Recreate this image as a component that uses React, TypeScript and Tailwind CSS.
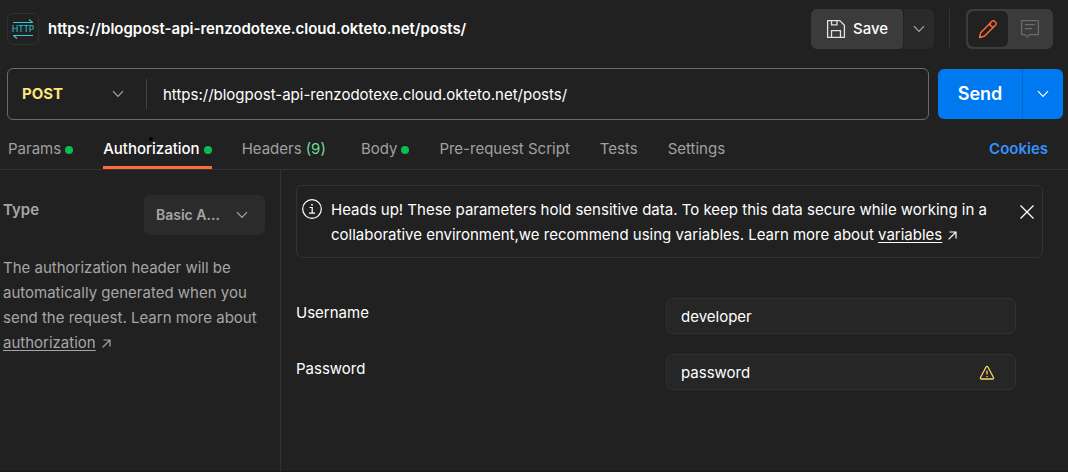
import type { ReactNode } from "react";

function Chevron({ className = "" }: { className?: string }) {
  return (
    <svg aria-hidden="true" className={className} width="12" height="8" viewBox="0 0 12 8" fill="none" stroke="currentColor" strokeWidth="1.2">
      <path d="M1 1.2 6 6.4l5-5.2" />
    </svg>
  );
}

function ExternalArrow() {
  return (
    <svg aria-hidden="true" className="ml-1.5 inline-block" width="9" height="9" viewBox="0 0 9 9" fill="none" stroke="currentColor" strokeWidth="1.2">
      <path d="M1.5 1h6.5v6.5M8 1 .6 8.4" />
    </svg>
  );
}

function HttpIcon() {
  return (
    <svg role="img" aria-label="HTTP request" width="24" height="20" viewBox="0 0 24 20" fill="none" stroke="#2fcbdc" strokeWidth="1.1">
      <path d="M2 3.500h20M18 .5l3.500 3M2 16.500h20M6 19.500l-3.500-3" />
      <text x="12" y="13" textAnchor="middle" fill="#2fcbdc" stroke="none" className="font-['Noto_Sans',sans-serif] text-[9px]">
        HTTP
      </text>
    </svg>
  );
}

function SaveIcon() {
  return (
    <svg aria-hidden="true" width="20" height="20" viewBox="0 0 20 20" fill="none" stroke="#e0e0e0" strokeWidth="1.3">
      <path d="M1.600 1.600h12.200l4.600 4.600v12.200H1.600z" strokeLinejoin="round" />
      <path d="M5.500 1.800v4h5.500v-4M5.500 18.200v-6.500h9v6.500" />
    </svg>
  );
}

function PencilIcon() {
  return (
    <svg aria-hidden="true" width="20" height="20" viewBox="0 0 20 20" fill="none" stroke="#ff6c37" strokeWidth="1.4" strokeLinejoin="round">
      <path d="M1.500 18.500l1.200-4.800L14 2.300a1.900 1.900 0 0 1 2.600 0l1.100 1.100a1.900 1.900 0 0 1 0 2.600L6.300 17.300zM12.600 3.800a2.600 2.600 0 0 0 3.600 3.600" />
    </svg>
  );
}

function CommentIcon() {
  return (
    <svg aria-hidden="true" width="20" height="20" viewBox="0 0 20 20" fill="none" stroke="#6b6b6b" strokeWidth="1.300">
      <path d="M1.600 1.600h16.800v14H9.500L7.300 17.900 5 15.600H1.600zM5 5.700h10M5 9.700h7" strokeLinejoin="round" />
    </svg>
  );
}

function Tab({ children, dot = false, active = false }: { children: ReactNode; dot?: boolean; active?: boolean }) {
  return (
    <button
      type="button"
      role="tab"
      aria-selected={active}
      className={
        active
          ? "flex h-10 items-center gap-1 border-b-3 border-[#ff6c37] pt-1 font-medium text-white"
          : "flex h-10 items-center gap-1 border-b-3 border-transparent pt-1 text-[#a0a0a0]"
      }
    >
      {children}
      {dot && <span className="size-2 rounded-full bg-[#0cbb52]" />}
    </button>
  );
}

function Header() {
  return (
    <header className="flex h-[58px] items-center pr-[15px] pl-[7px]">
      <div className="flex size-8 items-center justify-center rounded-md border border-[#303030]">
        <HttpIcon />
      </div>
      <h1 className="ml-[9px] grow font-semibold text-white">https://blogpost-api-renzodotexe.cloud.okteto.net/posts/</h1>
      <div className="flex h-10 gap-px">
        <button type="button" className="flex w-[92px] items-center justify-center gap-[7px] rounded-l-md rounded-r bg-[#3b3b3b] font-medium text-white">
          <SaveIcon />
          Save
        </button>
        <button type="button" aria-label="More save options" className="flex w-[30px] items-center justify-center rounded-r-md bg-[#2a2a2a] text-[#a6a6a6]">
          <Chevron />
        </button>
      </div>
      <div className="mr-4 ml-[15px] h-10 w-px bg-[#333]" />
      <div className="flex h-10 w-[87px] rounded-md bg-[#3b3b3b] p-0.5">
        <button type="button" aria-label="Edit" aria-pressed="true" className="flex w-10 items-center justify-center rounded-md bg-[#212121]">
          <PencilIcon />
        </button>
        <button type="button" aria-label="Comments" className="flex grow items-center justify-center">
          <CommentIcon />
        </button>
      </div>
    </header>
  );
}

function RequestBar() {
  return (
    <div className="flex gap-[9px] pt-[10px] pr-[5px] pl-[7px]">
      <div className="flex h-13 grow items-center rounded-md border border-[#6b6b6b]">
        <div className="grid w-[138px] items-center">
          <select aria-label="Method" defaultValue="POST" className="col-start-1 row-start-1 h-10 appearance-none bg-transparent pl-[14px] font-bold text-[#ffe47e] outline-none">
            <option>POST</option>
          </select>
          <Chevron className="pointer-events-none col-start-1 row-start-1 mr-[22px] justify-self-end text-[#a6a6a6]" />
        </div>
        <div className="h-[30px] w-px bg-[#444]" />
        <input aria-label="Request URL" defaultValue="https://blogpost-api-renzodotexe.cloud.okteto.net/posts/" className="h-full min-w-0 grow bg-transparent px-4 text-white outline-none" />
      </div>
      <div className="mt-px flex h-[50px] overflow-hidden rounded-md bg-[#0079f0] text-white">
        <button type="button" className="w-[84px] text-lg font-semibold">Send</button>
        <button type="button" aria-label="More send options" className="flex w-[41px] items-center justify-center border-l border-[#0668cc]">
          <Chevron />
        </button>
      </div>
    </div>
  );
}

function AuthSidebar() {
  return (
    <aside className="w-[281px] shrink-0 border-r border-[#333] pt-[25px] pr-[15px] pl-[3px] text-[#a6a6a6]">
      <div className="flex justify-between">
        <label htmlFor="auth-type" className="mt-1 font-semibold">Type</label>
        <div className="grid h-10 w-[121px] items-center rounded-md bg-[#2b2b2b]">
          <select id="auth-type" defaultValue="Basic A..." className="col-start-1 row-start-1 h-10 w-full appearance-none bg-transparent pl-3 text-sm font-semibold outline-none">
            <option>Basic A...</option>
          </select>
          <Chevron className="pointer-events-none col-start-1 row-start-1 mr-[17px] justify-self-end" />
        </div>
      </div>
      <p className="mt-5 leading-[25px]">
        The authorization header will be automatically generated when you send the request. Learn more about{" "}
        <a href="#authorization" className="underline underline-offset-2">authorization</a>
        <ExternalArrow />
      </p>
    </aside>
  );
}

function Field({ id, label, value, warn = false }: { id: string; label: string; value: string; warn?: boolean }) {
  return (
    <div className="flex items-center justify-between">
      <label htmlFor={id} className="mb-1.5">{label}</label>
      <div className="flex h-9 w-[350px] items-center rounded-md border border-[#303030] bg-[#262626]">
        <input id={id} defaultValue={value} className="h-full min-w-0 grow bg-transparent pl-[14px] outline-none" />
        {warn && (
          <svg role="img" aria-label="Sensitive value" className="mt-0.5 mr-5" width="16" height="16" viewBox="0 0 16 16" fill="none" stroke="#f5d565" strokeWidth="1.300" strokeLinejoin="round">
            <path d="M7.200 1.800 1.500 12.500c-.3.700 0 1.500.8 1.500h11.400c.8 0 1.100-.8.800-1.500L8.800 1.800c-.4-.7-1.200-.7-1.600 0zM8 5.500v4M8 11v1.200" />
          </svg>
        )}
      </div>
    </div>
  );
}

function AuthForm() {
  return (
    <section className="grow pt-[15px] pr-[25px] pl-[15px] text-white">
      <div role="note" className="flex items-start rounded-md border border-[#333] pt-[11px] pr-[7px] pb-2.5 pl-[5px]">
        <svg aria-hidden="true" className="mt-0.5 shrink-0" width="20" height="20" viewBox="0 0 20 20" fill="none" stroke="currentColor" strokeWidth="1.200">
          <circle cx="10" cy="10" r="9.300" />
          <path d="M7.500 8.500h2.700v5.500M7 14.200h6" />
          <path d="M9.200 5.800h1.600" strokeWidth="1.600" />
        </svg>
        <p className="ml-[9px] grow leading-[25px]">
          Heads up! These parameters hold sensitive data. To keep this data secure while working in a collaborative environment,we recommend using variables. Learn more about{" "}
          <a href="#variables" className="underline underline-offset-2">variables</a>
          <ExternalArrow />
        </p>
        <button type="button" aria-label="Dismiss" className="mt-[7px] ml-4 shrink-0">
          <svg aria-hidden="true" width="16" height="16" viewBox="0 0 16 16" fill="none" stroke="currentColor" strokeWidth="1.300">
            <path d="m1.500 1.500 13 13M14.500 1.500l-13 13" />
          </svg>
        </button>
      </div>
      <form className="mt-10 flex flex-col gap-5 pr-[27px]">
        <Field id="username" label="Username" value="developer" />
        <Field id="password" label="Password" value="password" warn />
      </form>
    </section>
  );
}

export default function App() {
  return (
    <div className="flex min-h-screen flex-col border-b border-[#1c1c1c] bg-[#212121] font-['Inter',sans-serif] text-[15px]">
      <Header />
      <RequestBar />
      <nav className="flex items-end justify-between border-b border-[#333] pt-[9px] pr-5 pl-2">
        <div role="tablist" className="flex gap-[30px]">
          <Tab dot>Params</Tab>
          <div className="relative">
            <Tab dot active>Authorization</Tab>
            <span className="absolute top-2 left-[46px] size-1 rounded-full bg-black" />
          </div>
          <Tab>Headers <span className="pr-[5px] text-[#6bdd9a]">(9)</span></Tab>
          <Tab dot>Body</Tab>
          <Tab>Pre-request Script</Tab>
          <Tab>Tests</Tab>
          <Tab>Settings</Tab>
        </div>
        <a href="#cookies" className="flex h-10 items-center border-b-3 border-transparent pt-1 font-semibold text-[#3691ff]">Cookies</a>
      </nav>
      <main className="flex grow">
        <AuthSidebar />
        <AuthForm />
      </main>
    </div>
  );
}
